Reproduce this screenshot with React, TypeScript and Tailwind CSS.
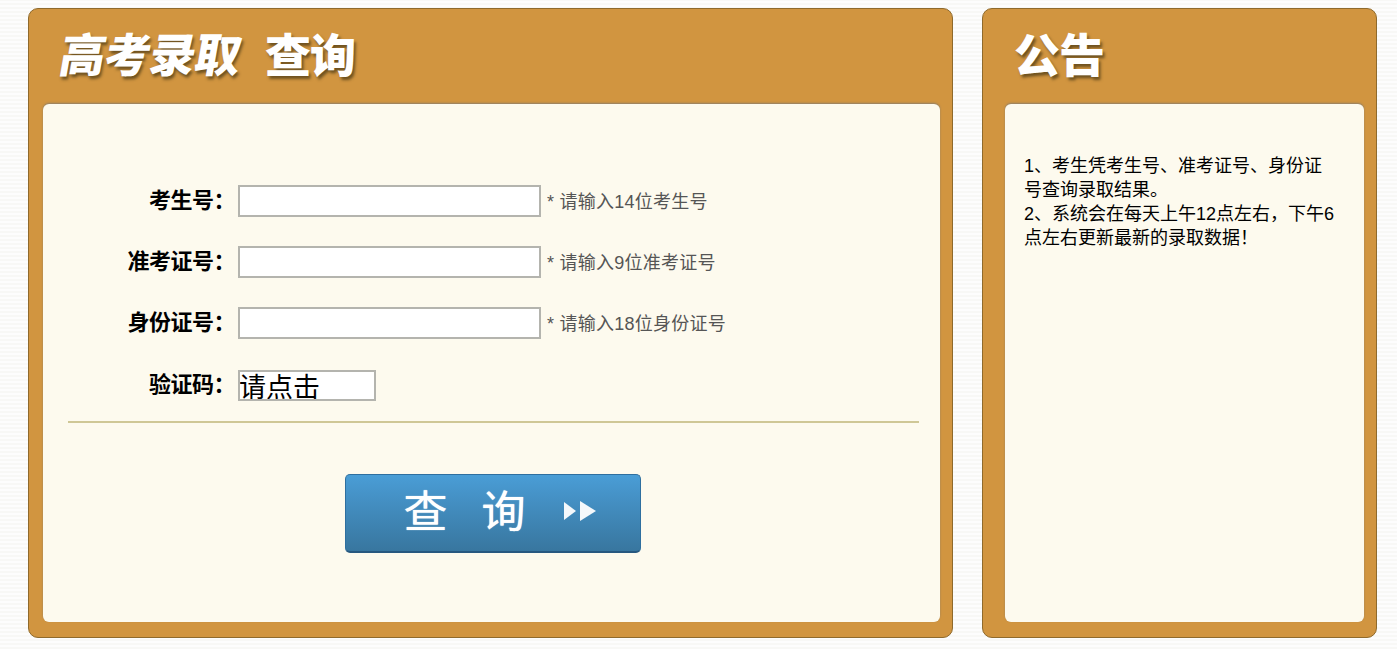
const CJK = "font-['Liberation_Sans','Noto_Sans_CJK_SC',sans-serif]";

const rows = [
  { label: "考生号：", hint: "* 请输入14位考生号" },
  { label: "准考证号：", hint: "* 请输入9位准考证号" },
  { label: "身份证号：", hint: "* 请输入18位身份证号" },
];

function Label({ children }: { children: string }) {
  return (
    <label className="w-[195px] shrink-0 pr-[3px] text-right text-[22px] leading-[30px] font-bold tracking-[-0.5px] text-black">
      {children}
    </label>
  );
}

export default function App() {
  return (
    <div
      className={`${CJK} flex h-[649px] w-full gap-[29px] overflow-hidden bg-[#fafafa] bg-[repeating-linear-gradient(0deg,#f8f8f6_0px,#f8f8f6_2px,#fdfdfd_2px,#fdfdfd_4px)] pt-[8px] pl-[28px]`}
    >
      {/* main panel */}
      <section className="flex h-[630px] w-[925px] flex-col rounded-[10px] border border-[#8f6a2c] bg-[#d19540] pr-[12px] pb-[15px] pl-[14px]">
        <h1 className="flex h-[95px] items-center gap-[25px] pl-[17px] text-[46px] font-black tracking-[-1px] text-white [text-shadow:2px_3px_3px_#6e5220]">
          <span className="skew-x-[-10deg]">高考录取</span>
          <span>查询</span>
        </h1>
        <div className="flex flex-1 flex-col rounded-[6px] bg-[#fdfaee] pt-[81px] pr-[21px] pl-[25px] shadow-[0_-1px_2px_#8f7f68]">
          <div className="-ml-[25px] flex flex-col gap-[29px]">
            {rows.map((row) => (
              <div key={row.label} className="flex h-[32px] items-center">
                <Label>{row.label}</Label>
                <input
                  type="text"
                  className="h-[32px] w-[303px] shrink-0 border-2 border-[#b4b4ae] bg-white"
                />
                <span className="mt-[2px] ml-[6px] text-[18px] tracking-[0.25px] text-[#555]">{row.hint}</span>
              </div>
            ))}
          </div>
          <div className="-ml-[25px] mt-[31px] flex h-[30px] items-center">
            <Label>验证码：</Label>
            <div className="h-[31px] w-[138px] overflow-hidden border-2 border-[#b4b4ae] bg-white indent-[-1px] text-[27px] leading-[32px] text-black">
              请点击
            </div>
          </div>
          <hr className="mt-[21px] border-0 border-t-2 border-[#cfc796]" />
          <button
            type="button"
            className="mt-[51px] ml-[277px] flex h-[79px] w-[296px] items-center justify-center rounded-[5px] border border-[#2f6f9f] border-b-2 border-b-[#27587f] bg-gradient-to-b from-[#4a9dd6] to-[#38769f] text-white"
          >
            <span className="ml-[14px] text-[44px] leading-none font-normal [text-shadow:0_0_1px_#fff]">查</span>
            <span className="ml-[34px] text-[44px] leading-none font-normal [text-shadow:0_0_1px_#fff]">询</span>
            <svg width="34" height="22" viewBox="0 0 34 22" className="mt-[-4px] ml-[37px]" fill="#f4f8fb">
              <path d="M1 2 L13 11 L1 20 Z" />
              <path d="M17 1 L33 11 L17 21 Z" />
            </svg>
          </button>
        </div>
      </section>

      {/* notice panel */}
      <aside className="flex h-[630px] w-[395px] flex-col rounded-[10px] border border-[#8f6a2c] bg-[#d19540] pr-[12px] pb-[15px] pl-[21px]">
        <h2 className="flex h-[95px] items-center pl-[10px] text-[46px] font-black tracking-[-1px] text-white [text-shadow:2px_3px_3px_#6e5220]">
          公告
        </h2>
        <div className="ml-px flex-1 rounded-[6px] bg-[#fdfaee] pt-[50px] pr-[28px] pl-[19px] text-[18px] leading-[24px] text-black shadow-[0_-1px_2px_#8f7f68]">
          <p>1、考生凭考生号、准考证号、身份证号查询录取结果。</p>
          <p>2、系统会在每天上午12点左右，下午6点左右更新最新的录取数据！</p>
        </div>
      </aside>
    </div>
  );
}
